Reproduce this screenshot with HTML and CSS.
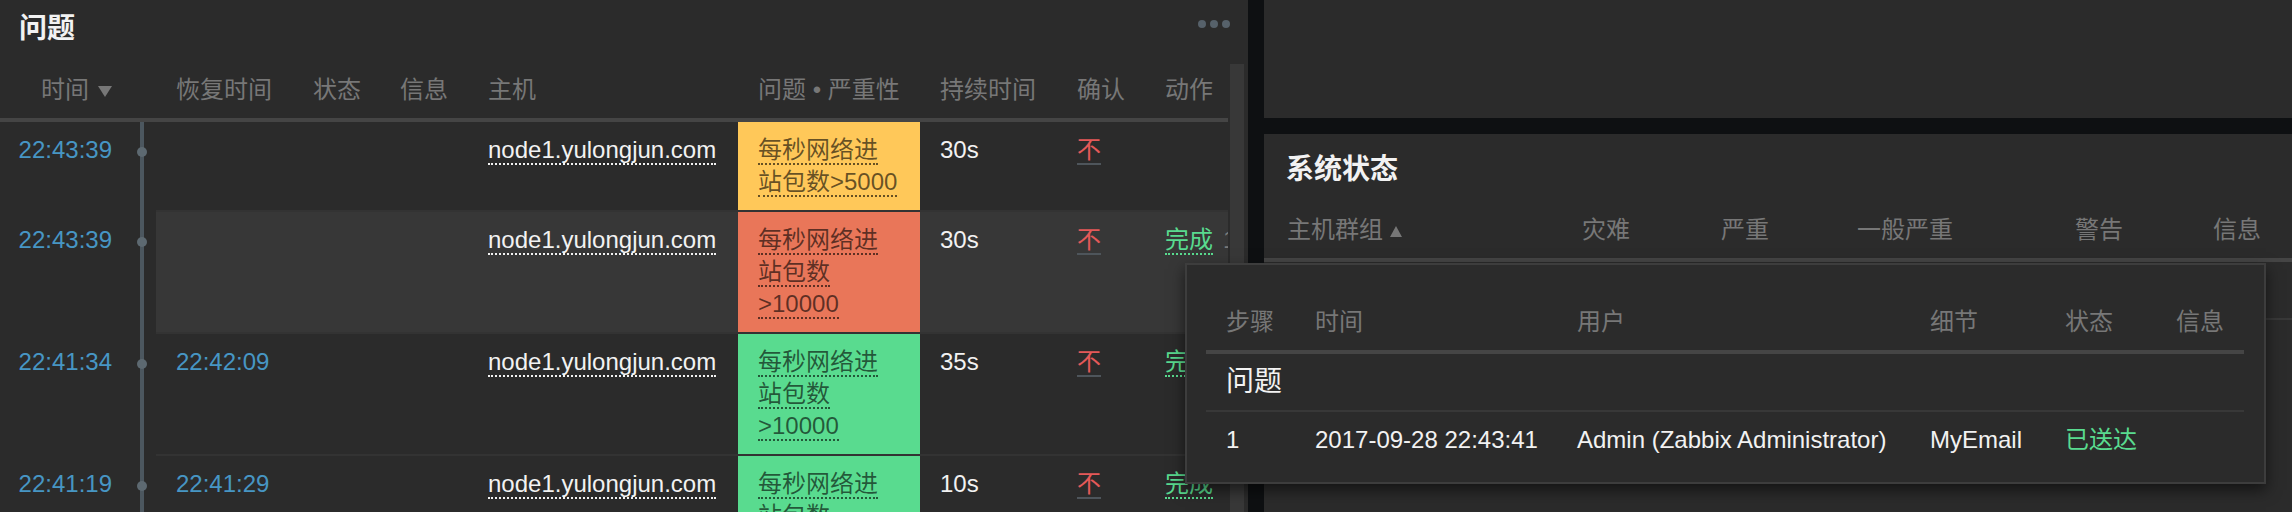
FILE: index.html
```html
<!DOCTYPE html>
<html lang="zh-CN">
<head>
<meta charset="utf-8">
<title>Dashboard</title>
<link rel="stylesheet" href="styles.css">
</head>
<body>
<div class="dashboard">
  <section class="widget problems">
    <header class="widget-head">
      <h4 class="widget-title">问题</h4>
      <button class="widget-menu" type="button" aria-label="menu"><i></i><i></i><i></i></button>
    </header>
    <div class="widget-body">
      <div class="table-clip">
        <div class="pt-row head">
          <div class="th c-time">时间<span class="arrow-down"></span></div>
          <div class="th c-axis"></div>
          <div class="th">恢复时间</div>
          <div class="th">状态</div>
          <div class="th">信息</div>
          <div class="th">主机</div>
          <div class="th">问题 • 严重性</div>
          <div class="th">持续时间</div>
          <div class="th">确认</div>
          <div class="th">动作</div>
        </div>

        <div class="pt-row">
          <div class="td c-time"><a class="time-link">22:43:39</a></div>
          <div class="td c-axis"><span class="dot"></span></div>
          <div class="td"></div>
          <div class="td"></div>
          <div class="td"></div>
          <div class="td"><a class="link host">node1.yulongjun.com</a></div>
          <div class="td sev sev-warning"><a class="link">每秒网络进站包数&gt;5000</a></div>
          <div class="td">30s</div>
          <div class="td"><a class="ack-no">不</a></div>
          <div class="td"></div>
        </div>

        <div class="pt-row hl">
          <div class="td c-time"><a class="time-link">22:43:39</a></div>
          <div class="td c-axis"><span class="dot"></span></div>
          <div class="td"></div>
          <div class="td"></div>
          <div class="td"></div>
          <div class="td"><a class="link host">node1.yulongjun.com</a></div>
          <div class="td sev sev-high"><a class="link">每秒网络进站包数&gt;10000</a></div>
          <div class="td">30s</div>
          <div class="td"><a class="ack-no">不</a></div>
          <div class="td nowrap"><a class="link done">完成</a><span class="count">1</span></div>
        </div>

        <div class="pt-row">
          <div class="td c-time"><a class="time-link">22:41:34</a></div>
          <div class="td c-axis"><span class="dot"></span></div>
          <div class="td"><a class="time-link">22:42:09</a></div>
          <div class="td"></div>
          <div class="td"></div>
          <div class="td"><a class="link host">node1.yulongjun.com</a></div>
          <div class="td sev sev-ok"><a class="link">每秒网络进站包数&gt;10000</a></div>
          <div class="td">35s</div>
          <div class="td"><a class="ack-no">不</a></div>
          <div class="td nowrap"><a class="link done">完成</a></div>
        </div>

        <div class="pt-row">
          <div class="td c-time"><a class="time-link">22:41:19</a></div>
          <div class="td c-axis"><span class="dot"></span></div>
          <div class="td"><a class="time-link">22:41:29</a></div>
          <div class="td"></div>
          <div class="td"></div>
          <div class="td"><a class="link host">node1.yulongjun.com</a></div>
          <div class="td sev sev-ok"><a class="link">每秒网络进站包数&gt;10000</a></div>
          <div class="td">10s</div>
          <div class="td"><a class="ack-no">不</a></div>
          <div class="td nowrap"><a class="link done">完成</a></div>
        </div>
      </div>
      <div class="scrollbar"></div>
    </div>
  </section>

  <div class="right-col">
    <section class="widget top-widget"></section>
    <section class="widget status">
      <h4 class="widget-title">系统状态</h4>
      <div class="st-row head">
        <div class="th">主机群组<span class="arrow-up"></span></div>
        <div class="th">灾难</div>
        <div class="th">严重</div>
        <div class="th">一般严重</div>
        <div class="th">警告</div>
        <div class="th">信息</div>
      </div>
      <div class="st-row">
        <div class="td">&nbsp;</div>
        <div class="td"></div>
        <div class="td"></div>
        <div class="td"></div>
        <div class="td"></div>
        <div class="td"></div>
      </div>
    </section>
  </div>

  <div class="hintbox">
    <div class="hb-row head">
      <div class="th">步骤</div>
      <div class="th">时间</div>
      <div class="th">用户</div>
      <div class="th">细节</div>
      <div class="th">状态</div>
      <div class="th">信息</div>
    </div>
    <div class="hb-row">
      <div class="td span-all section">问题</div>
    </div>
    <div class="hb-row last">
      <div class="td">1</div>
      <div class="td">2017-09-28 22:43:41</div>
      <div class="td">Admin (Zabbix Administrator)</div>
      <div class="td">MyEmail</div>
      <div class="td green">已送达</div>
      <div class="td"></div>
    </div>
  </div>
</div>
</body>
</html>
```
FILE: styles.css
```css
* { box-sizing: border-box; }

html, body { margin: 0; padding: 0; }

body {
  width: 2292px;
  height: 512px;
  overflow: hidden;
  background: #0e1012;
  font-family: "Liberation Sans", "Noto Sans CJK SC", sans-serif;
  font-size: 24px;
  line-height: 32px;
  color: #f2f2f2;
}

.dashboard {
  position: relative;
  display: grid;
  grid-template-columns: 1248px 1fr;
  column-gap: 16px;
  height: 512px;
}

.widget {
  background: #2b2b2b;
  overflow: hidden;
}

/* ---------- problems widget ---------- */
.problems {
  display: flex;
  flex-direction: column;
}

.widget-head {
  flex: none;
  display: flex;
  justify-content: space-between;
  align-items: flex-start;
  height: 62px;
  padding: 13px 18px 0 19px;
}

.widget-title {
  margin: 0;
  font-size: 28px;
  line-height: 32px;
  font-weight: 700;
  color: #f2f2f2;
}

.widget-menu {
  display: flex;
  gap: 4px;
  margin-top: 7px;
  padding: 0;
  border: 0;
  background: none;
}

.widget-menu i {
  display: block;
  width: 8px;
  height: 8px;
  border-radius: 50%;
  background: #56616a;
}

.widget-body {
  flex: 1;
  display: flex;
  min-height: 0;
}

.table-clip {
  flex: none;
  width: 1228px;
  overflow: hidden;
}

.scrollbar {
  flex: none;
  width: 14px;
  margin: 2px 0 0 2px;
  background: #383838;
}

.pt-row {
  display: grid;
  grid-template-columns: 132px 24px 137px 87px 88px 270px 182px 137px 88px 120px;
}

.th {
  padding: 12px 20px;
  color: #777;
  white-space: nowrap;
  border-bottom: 4px solid #454545;
}

.td {
  padding: 12px 20px;
  border-bottom: 2px solid #333;
}

.nowrap { white-space: nowrap; }

.c-time {
  text-align: right;
  padding-left: 0;
  padding-right: 20px;
}

.th.c-axis { padding: 0; }

.td.c-time,
.td.c-axis {
  border-bottom: 0;
}

.td.c-axis {
  padding: 0;
  background: linear-gradient(90deg, transparent 8px, #4c575f 8px, #4c575f 12px, transparent 12px);
}

.dot {
  display: block;
  width: 10px;
  height: 10px;
  margin: 25px 0 0 5px;
  border-radius: 50%;
  background: #5d6971;
}

.hl .td:not(.c-time):not(.c-axis):not(.sev) {
  background-color: #373737;
}

.arrow-down {
  display: inline-block;
  margin-left: 9px;
  border-left: 7px solid transparent;
  border-right: 7px solid transparent;
  border-top: 11px solid #777;
  vertical-align: 1px;
}

.arrow-up {
  display: inline-block;
  margin-left: 7px;
  border-left: 6px solid transparent;
  border-right: 6px solid transparent;
  border-bottom: 11px solid #777;
  vertical-align: 1px;
}

.time-link { color: #4796c4; }

.link {
  color: inherit;
  border-bottom: 2px dotted currentColor;
}

.host { color: #f2f2f2; }

.sev .link { color: rgba(0, 0, 0, 0.6); }
.sev-warning { background-color: #ffc859; }
.sev-high { background-color: #e97659; }
.sev-ok { background-color: #59db8f; }

.ack-no {
  color: #e45959;
  border-bottom: 2px solid #4e555b;
}

.done { color: #59db8f; }

.count {
  margin-left: 10px;
  color: #7a7a7a;
}

.green { color: #59db8f; }

/* ---------- right column ---------- */
.right-col {
  display: flex;
  flex-direction: column;
  gap: 16px;
}

.top-widget {
  flex: none;
  height: 118px;
}

.status {
  flex: 1;
  padding-top: 20px;
}

.status .widget-title {
  padding-left: 22px;
  margin-bottom: 16px;
}

.st-row {
  display: grid;
  grid-template-columns: 298px 139px 136px 218px 138px 1fr;
}

.st-row .th:first-child,
.st-row .td:first-child {
  padding-left: 23px;
}

.st-row .td { border-bottom-color: #383838; }

/* ---------- hint box ---------- */
.hintbox {
  position: absolute;
  left: 1185px;
  top: 263px;
  width: 1081px;
  height: 221px;
  padding: 29px 19px 0;
  background: #2b2b2b;
  border: 2px solid #3d3d3d;
  box-shadow: 0 6px 14px rgba(0, 0, 0, 0.55);
}

.hb-row {
  display: grid;
  grid-template-columns: 89px 262px 353px 135px 111px 88px;
}

.hb-row .td {
  white-space: nowrap;
  border-bottom-color: #383838;
}

.hb-row.last .td { border-bottom: 0; }

.span-all { grid-column: 1 / -1; }

.section {
  font-size: 28px;
}
```
